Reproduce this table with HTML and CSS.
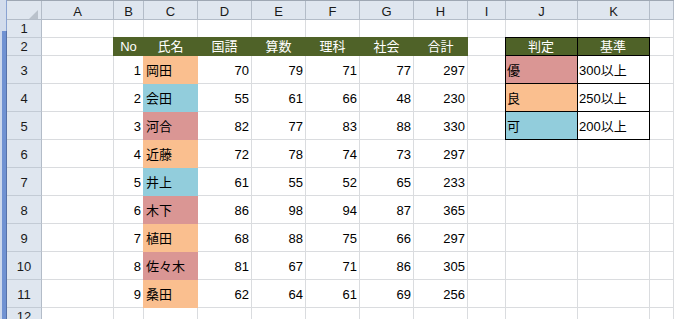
FILE: index.html
```html
<!DOCTYPE html>
<html lang="ja">
<head>
<meta charset="utf-8">
<title>成績表</title>
<link rel="stylesheet" href="styles.css">
</head>
<body>
<div class="window">
  <div class="stripe"><div class="stripe-top"></div><div class="stripe-bottom"></div></div>
  <div class="sheet">
    <div class="row head">
      <div class="c corner"><span class="tri"></span></div>
      <div class="c ch">A</div><div class="c ch">B</div><div class="c ch">C</div><div class="c ch">D</div><div class="c ch">E</div><div class="c ch">F</div><div class="c ch">G</div><div class="c ch">H</div><div class="c ch">I</div><div class="c ch">J</div><div class="c ch">K</div><div class="c ch"></div>
    </div>
    <div class="row short">
      <div class="c rh">1</div>
      <div class="c"></div><div class="c"></div><div class="c"></div><div class="c"></div><div class="c"></div><div class="c"></div><div class="c"></div><div class="c"></div><div class="c"></div><div class="c"></div><div class="c"></div><div class="c"></div>
    </div>
    <div class="row short">
      <div class="c rh">2</div>
      <div class="c"></div>
      <div class="c hd hd-first">No</div>
      <div class="c hd">氏名</div>
      <div class="c hd">国語</div>
      <div class="c hd">算数</div>
      <div class="c hd">理科</div>
      <div class="c hd">社会</div>
      <div class="c hd">合計</div>
      <div class="c"></div>
      <div class="c hd jb jt-left">判定</div>
      <div class="c hd jb jt-right">基準</div>
      <div class="c"></div>
    </div>
    <div class="row">
      <div class="c rh">3</div>
      <div class="c"></div><div class="c r">1</div><div class="c fill fo">岡田</div><div class="c r">70</div><div class="c r">79</div><div class="c r">71</div><div class="c r">77</div><div class="c r">297</div><div class="c"></div>
      <div class="c fill fp jb jl">優</div><div class="c jb">300以上</div><div class="c"></div>
    </div>
    <div class="row">
      <div class="c rh">4</div>
      <div class="c"></div><div class="c r">2</div><div class="c fill fb">会田</div><div class="c r">55</div><div class="c r">61</div><div class="c r">66</div><div class="c r">48</div><div class="c r">230</div><div class="c"></div>
      <div class="c fill fo jb jl">良</div><div class="c jb">250以上</div><div class="c"></div>
    </div>
    <div class="row">
      <div class="c rh">5</div>
      <div class="c"></div><div class="c r">3</div><div class="c fill fp">河合</div><div class="c r">82</div><div class="c r">77</div><div class="c r">83</div><div class="c r">88</div><div class="c r">330</div><div class="c"></div>
      <div class="c fill fb jb jl">可</div><div class="c jb">200以上</div><div class="c"></div>
    </div>
    <div class="row">
      <div class="c rh">6</div>
      <div class="c"></div><div class="c r">4</div><div class="c fill fo">近藤</div><div class="c r">72</div><div class="c r">78</div><div class="c r">74</div><div class="c r">73</div><div class="c r">297</div><div class="c"></div><div class="c"></div><div class="c"></div><div class="c"></div>
    </div>
    <div class="row">
      <div class="c rh">7</div>
      <div class="c"></div><div class="c r">5</div><div class="c fill fb">井上</div><div class="c r">61</div><div class="c r">55</div><div class="c r">52</div><div class="c r">65</div><div class="c r">233</div><div class="c"></div><div class="c"></div><div class="c"></div><div class="c"></div>
    </div>
    <div class="row">
      <div class="c rh">8</div>
      <div class="c"></div><div class="c r">6</div><div class="c fill fp">木下</div><div class="c r">86</div><div class="c r">98</div><div class="c r">94</div><div class="c r">87</div><div class="c r">365</div><div class="c"></div><div class="c"></div><div class="c"></div><div class="c"></div>
    </div>
    <div class="row">
      <div class="c rh">9</div>
      <div class="c"></div><div class="c r">7</div><div class="c fill fo">植田</div><div class="c r">68</div><div class="c r">88</div><div class="c r">75</div><div class="c r">66</div><div class="c r">297</div><div class="c"></div><div class="c"></div><div class="c"></div><div class="c"></div>
    </div>
    <div class="row">
      <div class="c rh">10</div>
      <div class="c"></div><div class="c r">8</div><div class="c fill fp">佐々木</div><div class="c r">81</div><div class="c r">67</div><div class="c r">71</div><div class="c r">86</div><div class="c r">305</div><div class="c"></div><div class="c"></div><div class="c"></div><div class="c"></div>
    </div>
    <div class="row">
      <div class="c rh">11</div>
      <div class="c"></div><div class="c r">9</div><div class="c fill fo">桑田</div><div class="c r">62</div><div class="c r">64</div><div class="c r">61</div><div class="c r">69</div><div class="c r">256</div><div class="c"></div><div class="c"></div><div class="c"></div><div class="c"></div>
    </div>
    <div class="row short">
      <div class="c rh">12</div>
      <div class="c"></div><div class="c"></div><div class="c"></div><div class="c"></div><div class="c"></div><div class="c"></div><div class="c"></div><div class="c"></div><div class="c"></div><div class="c"></div><div class="c"></div><div class="c"></div>
    </div>
  </div>
</div>
</body>
</html>
```
FILE: styles.css
```css
html, body {
  margin: 0;
  padding: 0;
  background: #ffffff;
}
body {
  width: 674px;
  height: 319px;
  overflow: hidden;
  font-family: "Liberation Sans", "Noto Sans CJK JP", sans-serif;
  font-size: 13px;
  color: #000;
}
.window {
  display: flex;
  height: 319px;
  overflow: hidden;
}
.stripe {
  width: 7px;
  flex: none;
  display: flex;
  flex-direction: column;
}
.stripe-top {
  height: 31px;
  background: linear-gradient(to right, #d2dcec 0 6px, #8aa3d2 6px 7px);
}
.stripe-bottom {
  flex: 1;
  background: linear-gradient(to right, #cdd8ec 0 2px, #7092d2 2px 6px, #5671a8 6px 7px);
}
.sheet {
  flex: 1;
  display: grid;
  grid-template-columns: 35px 72px 30px 54px 54px 54px 54px 54px 54px 38px 72px 72px 1fr;
  grid-template-rows: 19px 18px 18px repeat(9, 28px) 18px 18px;
  border-top: 1px solid #9ea7b3;
  align-content: start;
}
.row {
  display: contents;
}
.c {
  display: flex;
  align-items: flex-end;
  justify-content: flex-start;
  box-sizing: border-box;
  border-right: 1px solid #dadcdf;
  border-bottom: 1px solid #dadcdf;
  padding: 0 2px 5px 2px;
  line-height: 14px;
  white-space: nowrap;
  overflow: visible;
  background: #ffffff;
}
.short > .c {
  padding-bottom: 1px;
}
.head > .c {
  padding-bottom: 0;
}
.r {
  justify-content: flex-end;
}
.ch, .rh, .corner {
  background: #dfe6ef;
  border-right-color: #b3bcc8;
  border-bottom-color: #b3bcc8;
  justify-content: center;
  color: #1a1a1a;
}
.rh {
  border-bottom-color: #c3cbd5;
}
.corner {
  justify-content: flex-end;
  padding: 0 3px 2px 0;
}
.tri {
  width: 0;
  height: 0;
  border-left: 9px solid transparent;
  border-bottom: 9px solid #b9c1cb;
}
.hd {
  background: #4f6228;
  border-color: #4f6228;
  color: #ffffff;
  justify-content: center;
  box-shadow: 0 -1px 0 #4f6228;
}
.hd-first {
  box-shadow: -1px 0 0 #4f6228, 0 -1px 0 #4f6228, -1px -1px 0 #4f6228;
}
.fill {
  background: var(--f);
  border-color: var(--f);
  box-shadow: -1px 0 0 var(--f);
}
.fo { --f: #fabf8f; }
.fb { --f: #92cddc; }
.fp { --f: #da9694; }
.jb {
  border-right-color: #000;
  border-bottom-color: #000;
  padding-left: 1px;
}
.jl {
  box-shadow: -1px 0 0 #000;
}
.jt-left {
  box-shadow: -1px 0 0 #000, 0 -1px 0 #000, -1px -1px 0 #000;
}
.jt-right {
  box-shadow: 0 -1px 0 #000;
}
```
